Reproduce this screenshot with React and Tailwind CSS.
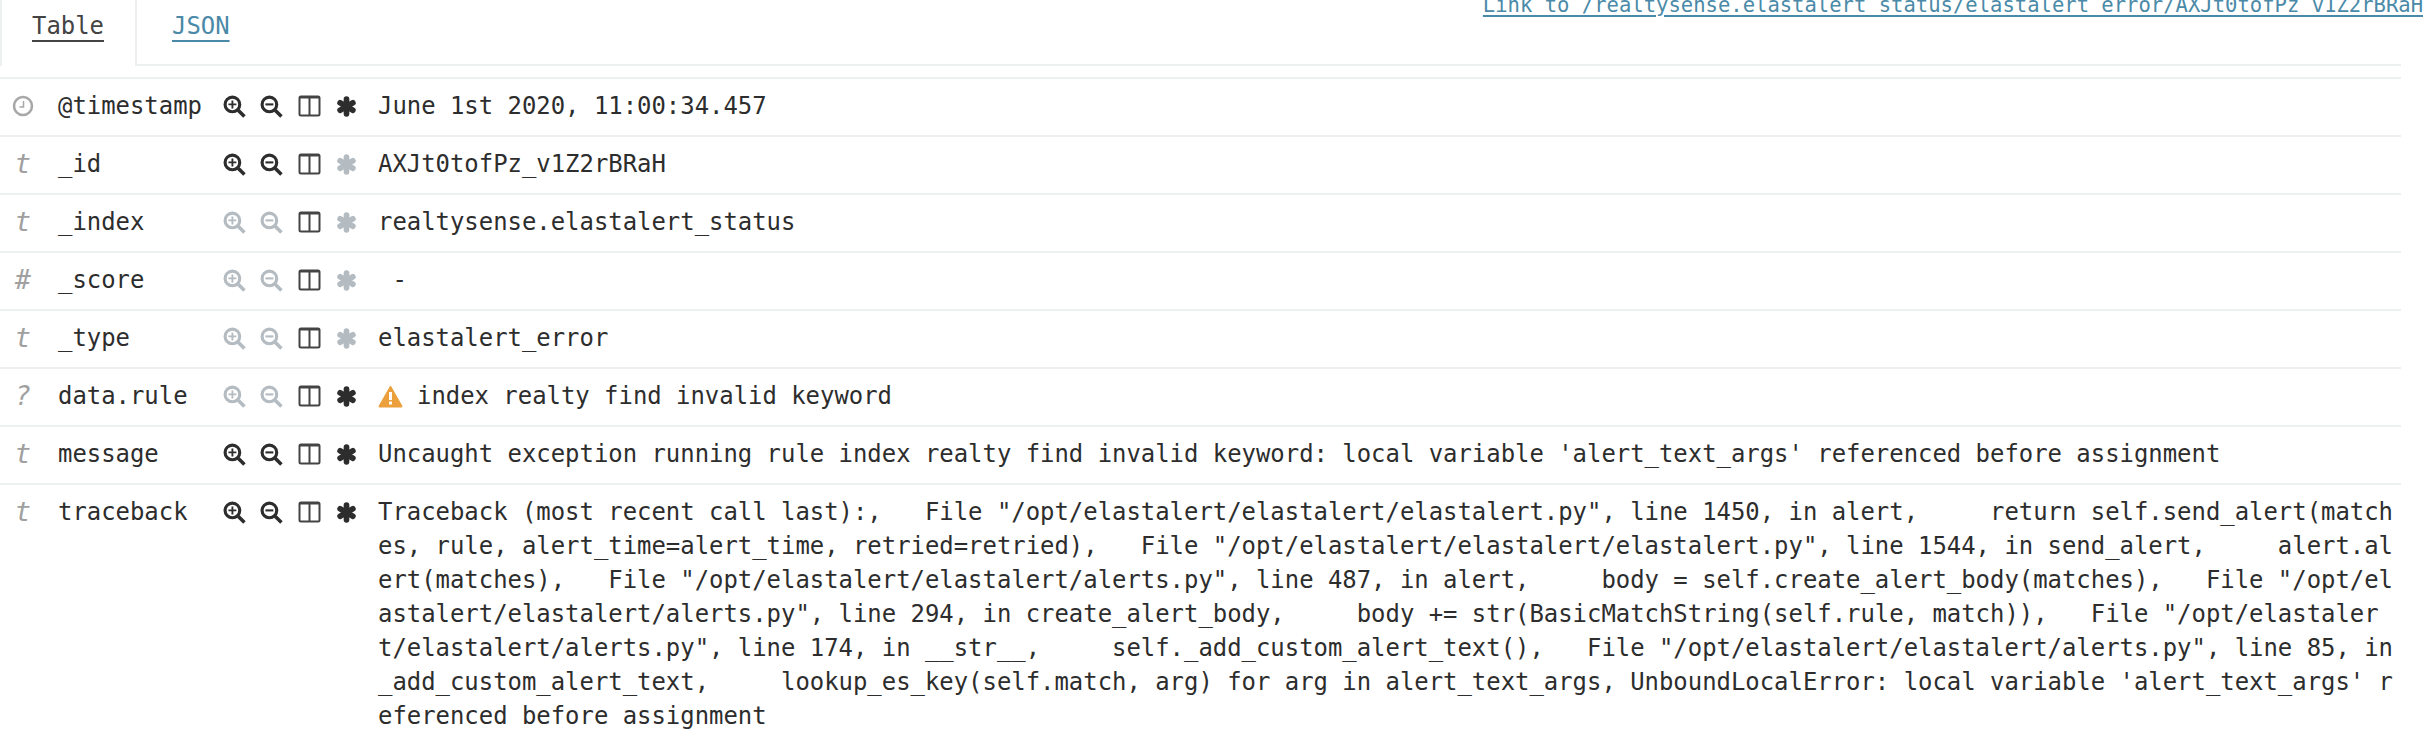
import React from "react";

const Plus = ({ c }) => (
  <svg width="23" height="23" viewBox="0 0 22 22" fill="none" stroke={c} className="shrink-0 -ml-px">
    <circle cx="9" cy="9" r="7" strokeWidth="3" />
    <path d="M14.5 14.5L20.5 20.5" strokeWidth="3.4" strokeLinecap="butt" />
    <path d="M9 5.2V12.8M5.2 9H12.8" strokeWidth="1.8" />
  </svg>
);
const Minus = ({ c }) => (
  <svg width="23" height="23" viewBox="0 0 22 22" fill="none" stroke={c} className="shrink-0 -ml-px">
    <circle cx="9" cy="9" r="7" strokeWidth="3" />
    <path d="M14.5 14.5L20.5 20.5" strokeWidth="3.4" strokeLinecap="butt" />
    <path d="M5.2 9H12.8" strokeWidth="2" />
  </svg>
);
const Cols = ({ c }) => (
  <svg width="23" height="22" viewBox="0 0 22 22" fill="none" stroke={c} className="shrink-0">
    <rect x="1" y="1.5" width="20" height="19" rx="1.5" strokeWidth="2" />
    <path d="M1 2.5H21" strokeWidth="2" />
    <path d="M11 2V20" strokeWidth="2" />
  </svg>
);
const Star = ({ c }) => (
  <svg width="21" height="21" viewBox="0 0 20 20" fill={c} className="shrink-0">
    <g stroke={c} strokeWidth="5.4" strokeLinecap="round">
      <path d="M10 3V17" />
      <path d="M3.9 6.5L16.1 13.5" />
      <path d="M16.1 6.5L3.9 13.5" />
    </g>
  </svg>
);
const Clock = () => (
  <svg width="22" height="22" viewBox="0 0 22 22" fill="none" stroke="#a8a8a8">
    <circle cx="11" cy="11" r="9" strokeWidth="2.6" />
    <path d="M11.5 6V12H7.5" strokeWidth="1.5" />
  </svg>
);
const Warn = () => (
  <svg width="25" height="23" viewBox="0 0 25 23" className="shrink-0">
    <path d="M12.5 1L24 21.2A.6.6 0 0 1 23.5 22H1.5A.6.6 0 0 1 1 21.2Z" fill="#eba03c" stroke="#eba03c" strokeWidth="1" strokeLinejoin="round" />
    <rect x="11" y="7" width="3" height="8" fill="#fff" />
    <rect x="11" y="16.5" width="3" height="3" fill="#fff" />
  </svg>
);

const DARK = "#2d2d2d";
const MUTE = "#b4bcc2";

const rows = [
  { t: "clock", f: "@timestamp", a: 1, b: 1, s: 1, v: "June 1st 2020, 11:00:34.457" },
  { t: "t", f: "_id", a: 1, b: 1, s: 0, v: "AXJt0tofPz_v1Z2rBRaH" },
  { t: "t", f: "_index", a: 0, b: 0, s: 0, v: "realtysense.elastalert_status" },
  { t: "#", f: "_score", a: 0, b: 0, s: 0, v: "\u00a0-" },
  { t: "t", f: "_type", a: 0, b: 0, s: 0, v: "elastalert_error" },
  { t: "?", f: "data.rule", a: 0, b: 0, s: 1, warn: 1, v: "index realty find invalid keyword" },
  { t: "t", f: "message", a: 1, b: 1, s: 1, v: "Uncaught exception running rule index realty find invalid keyword: local variable 'alert_text_args' referenced before assignment" },
  {
    t: "t", f: "traceback", a: 1, b: 1, s: 1,
    v: "Traceback (most recent call last):,   File \"/opt/elastalert/elastalert/elastalert.py\", line 1450, in alert,     return self.send_alert(match\nes, rule, alert_time=alert_time, retried=retried),   File \"/opt/elastalert/elastalert/elastalert.py\", line 1544, in send_alert,     alert.al\nert(matches),   File \"/opt/elastalert/elastalert/alerts.py\", line 487, in alert,     body = self.create_alert_body(matches),   File \"/opt/el\nastalert/elastalert/alerts.py\", line 294, in create_alert_body,     body += str(BasicMatchString(self.rule, match)),   File \"/opt/elastaler\nt/elastalert/alerts.py\", line 174, in __str__,     self._add_custom_alert_text(),   File \"/opt/elastalert/elastalert/alerts.py\", line 85, in\n_add_custom_alert_text,     lookup_es_key(self.match, arg) for arg in alert_text_args, UnboundLocalError: local variable 'alert_text_args' r\neferenced before assignment",
  },
];

export default function App() {
  return (
    <div className="w-[2436px] h-[752px] overflow-hidden bg-white text-[#2d2d2d] font-['DejaVu_Sans_Mono',monospace] text-[23.92px] leading-[34px]">
      <div className="relative flex h-[66px] w-[2401px]">
        <div className="w-[137px] h-[66px] shrink-0 border-x-2 border-[#ecf0f1] pl-[30px] pt-[9px]">
          <span className="underline underline-offset-[6px] decoration-2 text-[#444]">Table</span>
        </div>
        <div className="flex-1 border-b-2 border-[#ecf0f1] pl-[35px] pt-[9px]">
          <span className="underline underline-offset-[6px] decoration-2 text-[#4a8aa8]">JSON</span>
        </div>
        <a className="absolute right-[-22px] top-[-9px] text-[20.55px] leading-[28px] text-[#4a8aa8] underline underline-offset-[3px] decoration-2 whitespace-nowrap">
          Link to /realtysense.elastalert_status/elastalert_error/AXJt0tofPz_v1Z2rBRaH
        </a>
      </div>
      <div className="mt-[11px] w-[2401px]">
        {rows.map((r) => (
          <div key={r.f} className="flex border-t-2 border-[#ecf0f1] pt-[10px] pb-[12px]">
            <div className="w-[58px] shrink-0 h-[34px] flex items-center justify-center pr-[14px] pl-[2px] italic text-[#a0a0a0] text-[27px]">
              {r.t === "clock" ? <Clock /> : <span>{r.t}</span>}
            </div>
            <div className="w-[166px] shrink-0">{r.f}</div>
            <div className="w-[154px] shrink-0 h-[34px] flex items-center">
              <div className="w-[37px]"><Plus c={r.a ? DARK : MUTE} /></div>
              <div className="w-[37px]"><Minus c={r.b ? DARK : MUTE} /></div>
              <div className="w-[38px]"><Cols c="#444" /></div>
              <Star c={r.s ? DARK : MUTE} />
            </div>
            {r.warn ? (
              <div className="flex items-center h-[34px] gap-[14px]">
                <Warn />
                <span>{r.v}</span>
              </div>
            ) : (
              <div className="flex-1 min-w-0 whitespace-pre">{r.v}</div>
            )}
          </div>
        ))}
      </div>
    </div>
  );
}
